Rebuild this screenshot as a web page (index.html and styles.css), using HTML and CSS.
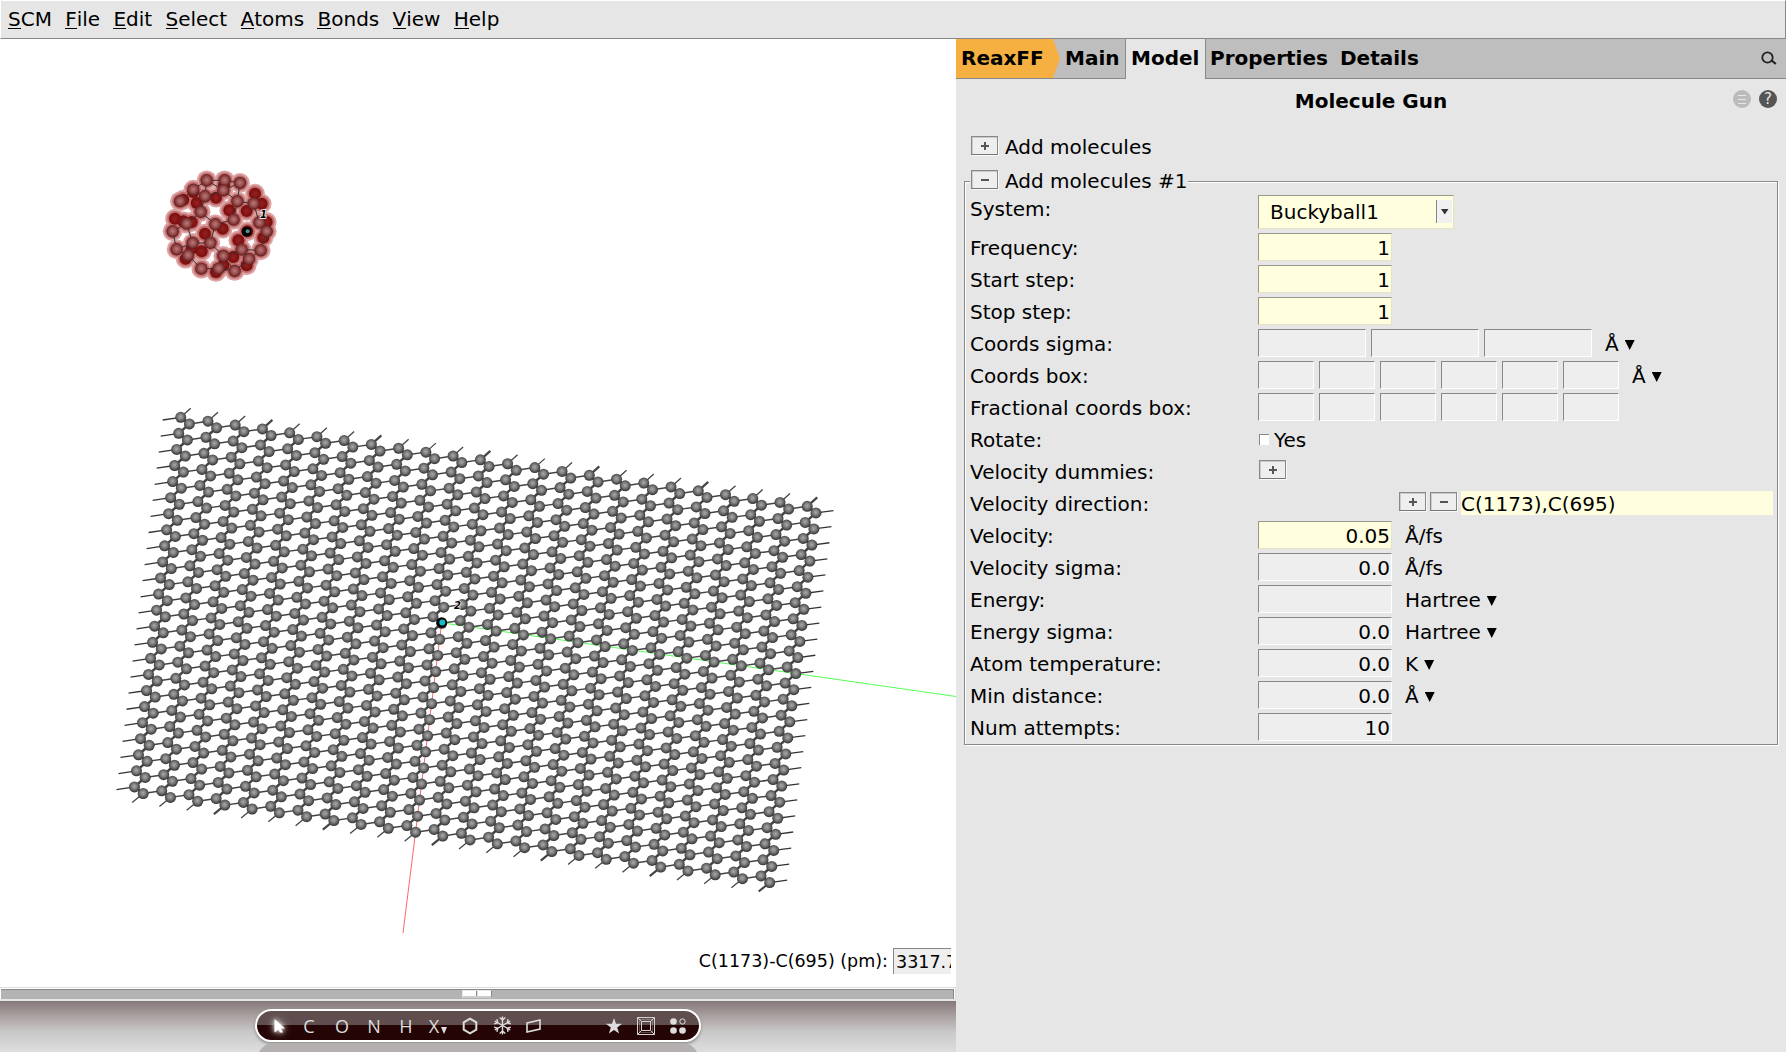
FILE: index.html
```html
<!DOCTYPE html>
<html lang="en">
<head>
<meta charset="utf-8">
<title>Molecule Gun</title>
<link rel="stylesheet" href="styles.css">
</head>
<body>
<nav class="menubar">
<span><u>S</u>CM</span><span><u>F</u>ile</span><span><u>E</u>dit</span><span><u>S</u>elect</span><span><u>A</u>toms</span><span><u>B</u>onds</span><span><u>V</u>iew</span><span><u>H</u>elp</span>
</nav>
<main class="workspace">
<section class="viewer">
<div class="stage">
<svg id="scene" width="956" height="948" viewBox="0 39 956 948">
<defs>
<radialGradient id="carbon" cx=".48" cy=".45" r=".58"><stop offset="0" stop-color="#a8a8a8"/><stop offset=".4" stop-color="#828282"/><stop offset=".8" stop-color="#484848"/><stop offset="1" stop-color="#262626"/></radialGradient>
<radialGradient id="front" cx=".5" cy=".48" r=".55"><stop offset="0" stop-color="#b97a7a"/><stop offset=".5" stop-color="#984c4c"/><stop offset="1" stop-color="#551212"/></radialGradient>
<radialGradient id="back"><stop offset="0" stop-color="#962222"/><stop offset="1" stop-color="#780c0c"/></radialGradient>
</defs>
</svg>
<div class="measure"><span>C(1173)-C(695) (pm):</span><span class="measure-value">3317.7</span></div>
</div>
<div class="splitter"><div class="trough"><i class="grip"></i></div></div>
<div class="dock">
<div class="pill">
<span class="tool"><svg class="glow" width="32" height="28" viewBox="0 0 32 28"><path d="M12.500 7v13.500l4-3 1.500 3h3l-2-4h4z" fill="#fff"/></svg></span>
<span class="tool tool-c">C</span><span class="tool">O</span><span class="tool">N</span><span class="tool">H</span>
<span class="tool tool-x">X<svg width="6" height="7"><path d="M0 0h6L3 7z" fill="#ddd"/></svg></span>
<span class="tool"><svg width="18" height="18" viewBox="0 0 18 18"><path d="M9 1.700l6.300 3.650v7.300L9 16.300l-6.300-3.650v-7.300z" fill="none" stroke="#ddd" stroke-width="2"/></svg></span>
<span class="tool"><svg width="19" height="19" viewBox="-9.500 -9.500 19 19" fill="none" stroke="#ddd" stroke-width="1.400"><path id="arm" d="M0 0V-9M-2.800-8L0-5.500 2.800-8"/><use href="#arm" transform="rotate(60)"/><use href="#arm" transform="rotate(120)"/><use href="#arm" transform="rotate(180)"/><use href="#arm" transform="rotate(240)"/><use href="#arm" transform="rotate(300)"/></svg></span>
<span class="tool"><svg width="18" height="16"><path d="M2 5l13-3v9L2 14z" fill="none" stroke="#ddd" stroke-width="1.600"/></svg></span>
<span class="tool tool-right"><svg width="18" height="18" viewBox="0 0 18 18"><path d="M9 1l2 5.800h6.200l-5 3.700 1.900 6L9 12.900l-5.100 3.600 1.900-6-5-3.700H7z" fill="#ddd"/></svg></span>
<span class="tool"><svg width="18" height="18" viewBox="0 0 18 18" fill="none" stroke="#d5d0d0"><path d="M.5.500h17v17H.500zM4.500 4.500h9v9h-9zM.5.500l4 4M17.500.500l-4 4M.5 17.500l4-4M17.500 17.500l-4-4"/><path d="M2.500 2.500h13v13h-13z" stroke-opacity=".35"/></svg></span>
<span class="tool"><svg width="18" height="18" viewBox="0 0 18 18" fill="#ddd"><circle cx="4.500" cy="4.500" r="3.300"/><circle cx="13.500" cy="4.500" r="2.700" fill="none" stroke="#ddd"/><circle cx="4.500" cy="13.500" r="3.300"/><circle cx="13.500" cy="13.500" r="3.300"/></svg></span>
</div>
<div class="reflection"></div>
</div>
</section>
<section class="panel">
<div class="tabs"><span class="tab tab-engine">ReaxFF</span><span class="tab tab-main">Main</span><span class="tab tab-active">Model</span><span class="tab tab-props">Properties</span><span class="tab">Details</span>
<svg class="search" width="16" height="16"><circle cx="6.500" cy="6.500" r="5.200" fill="none" stroke="#222" stroke-width="1.800"/><path d="M9.800 10h1.500l3.500 3" stroke="#222" stroke-width="2.200" fill="none"/></svg></div>
<header class="title-row"><h1>Molecule Gun</h1>
<svg class="badges" width="44" height="18"><circle cx="9" cy="9" r="9" fill="#bbb"/><path d="M5 5.500h8M5 9.500h8M5 13.500h8" stroke="#e8e8e8"/><circle cx="35" cy="9" r="9" fill="#555"/><text x="35" y="14" text-anchor="middle">?</text></svg></header>
<div class="add-row"><button class="btn plus"></button><span>Add molecules</span></div>
<div class="group">
<div class="group-head"><button class="btn minus"></button><span>Add molecules #1</span></div>
<div class="row row-system"><label>System:</label><span class="combo"><span>Buckyball1</span><i><svg width="8" height="6"><path d="M0 0h7.500L3.750 5.500z" fill="#333"/></svg></i></span></div>
<div class="row"><label>Frequency:</label><span class="field set">1</span></div>
<div class="row"><label>Start step:</label><span class="field set">1</span></div>
<div class="row"><label>Stop step:</label><span class="field set">1</span></div>
<div class="row"><label>Coords sigma:</label><span class="many"><span class="field third"></span><span class="field third"></span><span class="field third"></span></span><span class="unit">Å<b></b></span></div>
<div class="row"><label>Coords box:</label><span class="many"><span class="field sixth"></span><span class="field sixth"></span><span class="field sixth"></span><span class="field sixth"></span><span class="field sixth"></span><span class="field sixth"></span></span><span class="unit">Å<b></b></span></div>
<div class="row"><label class="wide">Fractional coords box:</label><span class="many"><span class="field sixth"></span><span class="field sixth"></span><span class="field sixth"></span><span class="field sixth"></span><span class="field sixth"></span><span class="field sixth"></span></span></div>
<div class="row"><label>Rotate:</label><i class="check"></i><span class="yes">Yes</span></div>
<div class="row"><label>Velocity dummies:</label><button class="btn plus inset"></button></div>
<div class="row"><label>Velocity direction:</label><span class="direction"><button class="btn plus"></button><button class="btn minus"></button><span class="atoms">C(1173),C(695)</span></span></div>
<div class="row"><label>Velocity:</label><span class="field set">0.05</span><span class="unit">Å/fs</span></div>
<div class="row"><label>Velocity sigma:</label><span class="field">0.0</span><span class="unit">Å/fs</span></div>
<div class="row"><label>Energy:</label><span class="field"></span><span class="unit">Hartree<b></b></span></div>
<div class="row"><label>Energy sigma:</label><span class="field">0.0</span><span class="unit">Hartree<b></b></span></div>
<div class="row"><label>Atom temperature:</label><span class="field">0.0</span><span class="unit">K<b></b></span></div>
<div class="row"><label>Min distance:</label><span class="field">0.0</span><span class="unit">Å<b></b></span></div>
<div class="row"><label>Num attempts:</label><span class="field">10</span></div>
</div>
</section>
</main>
<script src="scene.js"></script>
</body>
</html>
```
FILE: styles.css
```css
* { box-sizing: border-box; }
body { margin: 0; width: 1786px; height: 1052px; overflow: hidden; background: #e6e6e6; color: #000; font: 20px/24px "DejaVu Sans", sans-serif; display: flex; flex-direction: column; }
svg { display: block; flex: none; }
.menubar { height: 39px; flex: none; display: flex; gap: 13.3px; padding: 6px 0 0 7px; border: 1px solid #fff; border-right-color: #888; border-bottom-color: #888; }
.menubar span { height: 24px; line-height: 24px; }
.menubar u { display: inline-block; height: 22px; line-height: 24px; text-decoration: none; border-bottom: 1px solid #000; vertical-align: top; }
.workspace { display: flex; flex: 1; min-height: 0; }
.viewer { width: 956px; display: flex; flex-direction: column; background: #fff; }
.stage { position: relative; height: 948px; flex: none; }
.measure { position: absolute; right: 5px; bottom: 12px; display: flex; height: 27px; font-size: 17.500px; line-height: 27px; }
.measure-value { width: 58px; height: 26px; margin-left: 5px; padding-left: 2px; overflow: hidden; background: #eee; border-top: 1px solid #888; border-left: 1px solid #888; }
.splitter { height: 14px; flex: none; padding: 1px 1px 0 1px; border-top: 1px solid #ddd; border-right: 1px solid #ddd; border-bottom: 2px solid #e6e6e6; background: #fff; }
.trough { height: 10px; width: 953px; padding-left: 461px; border-top: 1px solid #888; border-right: 1px solid #888; background: #b3b3b3; display: flex; }
.grip { width: 30px; height: 8px; border: 1px solid #e6e6e6; border-right-color: #888; background: linear-gradient(90deg, #fff 13px, #888 13px, #888 14px, #ddd 14px, #ddd 15px, #fff 15px); border-bottom: 2px solid #ccc; }
.dock { flex: 1; padding-top: 8px; overflow: hidden; background: linear-gradient(#857878, #aaa1a1 30%, #c9c8c8 60%, #dedede); }
.pill { width: 446px; height: 33px; margin-left: 255px; border: 2px solid #fff; border-radius: 17px; background: linear-gradient(#604e4e 50%, #240404 50%); box-shadow: 0 2px 3px #5558; display: flex; align-items: center; padding-left: 5px; }
.tool { width: 32px; height: 28px; flex: none; display: flex; align-items: center; justify-content: center; color: #ddd; font: 18px/28px "Open Sans", sans-serif; }
.tool-c { padding-right: 2px; }
.tool-x svg { margin: 10px 0 0 2px; }
.tool-right { margin-left: 48px; }
.glow { filter: drop-shadow(0 0 2px #fff) drop-shadow(0 0 4px #fff8); }
.reflection { width: 442px; height: 30px; margin: 1px 0 0 257px; border-radius: 17px 17px 0 0; background: #b4b0b0; }
.panel { width: 830px; display: flex; flex-direction: column; }
.tabs { height: 40px; background: #bebebe; border-bottom: 1px solid #888; display: flex; font-weight: bold; line-height: 39px; align-items: flex-start; }
.tab { height: 39px; padding: 0 6px; font-size: 20px; }
.tab-engine { width: 104px; padding-left: 5px; background: #f6b042; clip-path: polygon(0 0, 97px 0, 104px 50%, 97px 100%, 0 100%); }
.tab-main { width: 65px; padding-left: 5px; }
.tab-active { width: 81px; height: 40px; padding-left: 5px; background: #e6e6e6; border-left: 1px solid #888; border-right: 1px solid #888; }
.tab-props { width: 128px; padding-left: 4px; }
.search { margin: 12px 9px 0 auto; }
.title-row { position: relative; height: 57px; padding-top: 10px; }
h1 { margin: 0; text-align: center; font-size: 20px; line-height: 24px; }
.badges { position: absolute; right: 9px; top: 11px; font: 15px "DejaVu Sans", sans-serif; fill: #e6e6e6; }
.add-row { height: 34px; margin-left: 15px; display: flex; gap: 6px; }
.btn { width: 27px; height: 19px; padding: 0; flex: none; border: 1px solid #888; border-bottom-color: #777; outline: 0; background: #eee; box-shadow: inset 1px 1px #ccc, 1px 1px #f8f8f8; display: flex; align-items: center; justify-content: center; }
.btn::before { content: ""; width: 8px; height: 8px; background: linear-gradient(#555, #555) center / 8px 2px no-repeat; }
.plus::before { background: linear-gradient(#555, #555) center / 8px 2px no-repeat, linear-gradient(#555, #555) center / 2px 8px no-repeat; }
.group { width: 814px; height: 564px; margin: 11px 0 0 8px; border: 1px solid #888; box-shadow: inset 1px 1px #fff, 1px 1px #fff; padding: 0 1px; }
.group-head { width: 218px; height: 24px; margin: -12px 0 0 4px; padding-left: 1px; background: #e6e6e6; display: flex; gap: 6px; white-space: nowrap; }
.add-row span, .group-head span { margin-left: 1px; margin-top: -1px; }
.row { height: 32px; display: flex; padding-top: 2px; }
.row label { width: 292px; flex: none; padding-left: 4px; line-height: 30px; }
.row .wide { letter-spacing: .1px; }
.row-system { height: 37px; padding-top: 1px; }
.row-system label { line-height: 29px; }
.combo { width: 196px; height: 34px; padding: 4px 1px 5px 11px; line-height: 25px; display: flex; justify-content: space-between; background: #ffffdf; border: 1px solid #99998a; border-right-color: #e5e5c6; border-bottom-color: #e5e5c6; }
.combo i { width: 16px; height: 23px; background: #f1f1f1; border-left: 1px solid #888; display: flex; align-items: center; justify-content: center; }
.field { width: 134px; height: 28px; padding-right: 1px; line-height: 28px; text-align: right; background: #eee; border: 1px solid #888; border-right-color: #fff; border-bottom-color: #fff; }
.set { background: #ffffdf; border-top-color: #99998a; border-left-color: #99998a; border-right-color: #e5e5c6; border-bottom-color: #e5e5c6; }
.many { display: flex; gap: 5px; }
.third { width: 108px; }
.sixth { width: 56px; }
.unit { margin-left: 13px; line-height: 30px; display: flex; }
.unit b { width: 10px; height: 10px; margin: 11px 0 0 6px; background: #000; clip-path: polygon(0 0, 100% 0, 50% 100%); }
.check { width: 10px; height: 11px; margin: 9px 0 0 1px; background: #fff; border-top: 1px solid #888; border-left: 1px solid #888; }
.yes { margin-left: 5px; line-height: 30px; }
.inset { margin: 3px 0 0 1px; }
.direction { width: 515px; padding-left: 141px; display: flex; gap: 4px; }
.direction .btn { margin-top: 3px; }
.atoms { width: 312px; height: 24px; margin-top: 2px; background: #ffffdf; line-height: 26px; }
.halo-outer { fill: #dba3a3; }
.halo-inner { fill: #c26d6d; }
.carbon { fill: url(#carbon); }
.front { fill: url(#front); }
.back { fill: url(#back); }
.tag { font: italic bold 10px "DejaVu Sans", sans-serif; stroke: #fff; stroke-width: 1.500px; paint-order: stroke; }
```
FILE: scene.js
```js
const NS = 'http://www.w3.org/2000/svg';
const scene = document.getElementById('scene');

function add(name, attrs, text) {
  const node = document.createElementNS(NS, name);
  for (const key in attrs) node.setAttribute(key, attrs[key]);
  if (text) node.textContent = text;
  scene.appendChild(node);
}
function line(a, b, color, width) {
  add('line', { x1: a[0], y1: a[1], x2: b[0], y2: b[1], stroke: color, 'stroke-width': width });
}
function ball(p, r, cls) {
  add('circle', { cx: p[0], cy: p[1], r: r, class: cls });
}

// Graphene sheet: two atoms per cell, 24 columns by 24 rows.
const N = 24;
const upper = (c, r) => [180.700 + 27.240 * c - 2.010 * r, 417.300 + 3.870 * c + 16.070 * r];
const lower = (c, r) => { const p = upper(c, r); return [p[0] + 8.700, p[1] + 6.600]; };
for (let r = 0; r < N; r++) {
  for (let c = 0; c < N; c++) {
    const a = upper(c, r), b = lower(c, r);
    line(a, b, '#444', 3);
    if (r) line(a, lower(c, r - 1), '#444', 2.500);
    else line(a, [a[0] + 10, a[1] - 9], '#444', c % 4 === 3 ? 2.200 : 1.300);
    if (c < N - 1) line(b, upper(c + 1, r), '#444', 1.500);
    else line(b, [b[0] + 17.500, b[1] - 2.300], '#333', 1.300);
    if (!c) line(a, [a[0] - 18, a[1] + 2.700], '#333', 1.300);
    if (r === N - 1) line(b, [b[0] - 11, b[1] + 9], '#444', c % 4 === 3 ? 2.200 : 1.300);
  }
}
line([441.700, 622.800], [956, 696.500], '#5f5', 1);
line([441.700, 622.800], [403, 933], '#f66', 1);
for (let r = 0; r < N; r++) {
  for (let c = 0; c < N; c++) {
    ball(upper(c, r), 5.500, 'carbon');
    ball(lower(c, r), 5.500, 'carbon');
  }
}
ball([441.700, 622.500], 5.300, 'core');
ball([442.300, 622.500], 3, 'origin');
scene.lastChild.setAttribute('fill', '#12bfc8');

// Buckyball, in thirds of a pixel from (140, 150).
const place = ([x, y]) => [140 + x / 3, 150.300 + y / 3];
const back = [[170,158],[228,142],[252,105],[345,130],[365,160],[320,182],[268,180],[105,205],[130,213],[155,215],[195,250],[248,235],[380,215],[370,262],[322,243],[295,270],[137,325],[185,303],[155,295],[228,365],[280,320],[320,345],[250,345],[130,148],[160,125]].map(place);
const front = [[200,90],[254,90],[300,98],[160,118],[195,138],[250,120],[120,153],[292,153],[341,160],[182,185],[281,208],[140,220],[226,222],[358,217],[98,243],[380,243],[158,278],[211,278],[110,297],[305,298],[362,300],[144,315],[250,317],[327,326],[184,355],[236,355],[284,362]].map(place);
const all = back.concat(front);
all.forEach(p => ball(p, 9.900, 'halo-outer'));
all.forEach(p => ball(p, 7.800, 'halo-inner'));
back.forEach(p => ball(p, 6, 'back'));
front.forEach((p, i) => front.slice(i + 1).forEach(q => {
  if (Math.hypot(p[0] - q[0], p[1] - q[1]) < 20.500) line(p, q, '#333', 1);
}));
front.forEach(p => ball(p, 6.200, 'front'));
ball(place([320, 244]), 5, 'core');
ball(place([323, 243]), 2, 'mark');
scene.lastChild.setAttribute('fill', '#4e9090');
add('text', { x: 260, y: 218, class: 'tag' }, '1');
add('text', { x: 454, y: 608.500, class: 'tag' }, '2');
```
